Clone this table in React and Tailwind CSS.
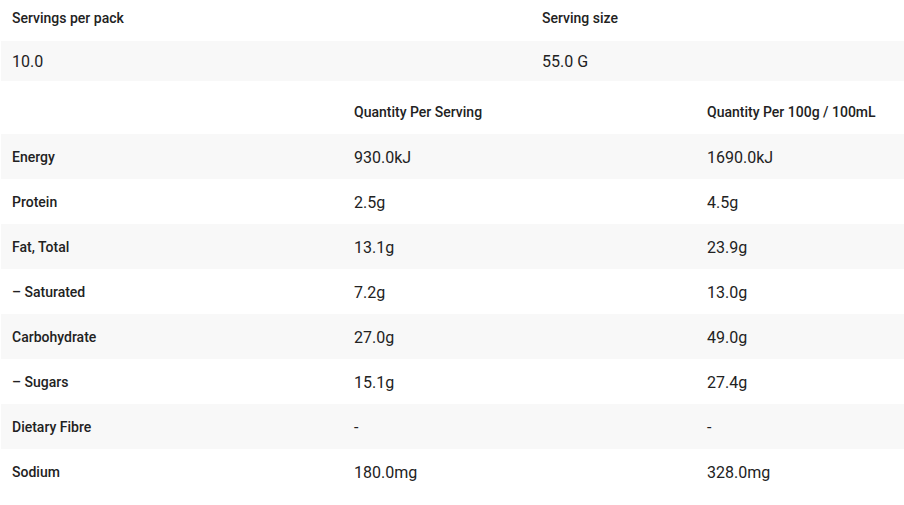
const rows = [
  ["Energy", "930.0kJ", "1690.0kJ"],
  ["Protein", "2.5g", "4.5g"],
  ["Fat, Total", "13.1g", "23.9g"],
  ["– Saturated", "7.2g", "13.0g"],
  ["Carbohydrate", "27.0g", "49.0g"],
  ["– Sugars", "15.1g", "27.4g"],
  ["Dietary Fibre", "-", "-"],
  ["Sodium", "180.0mg", "328.0mg"],
];

export default function App() {
  return (
    <div className="w-[904px] h-[505px] bg-white pl-px font-['Roboto',sans-serif] text-[#222]">
      {/* serving info */}
      <div className="grid grid-cols-[530px_1fr]">
        <div className="h-[37px] px-[11px] flex items-center text-[14px] font-medium">
          Servings per pack
        </div>
        <div className="h-[37px] px-[11px] flex items-center text-[14px] font-medium">
          Serving size
        </div>
      </div>
      <div className="grid grid-cols-[530px_1fr] mt-[4px] bg-[#f8f8f8] h-[40px] items-center">
        <div className="px-[11px] text-[16px] mt-px">10.0</div>
        <div className="px-[11px] text-[16px] mt-px">55.0 G</div>
      </div>

      {/* nutrition table */}
      <div className="mt-[9px]">
        <div className="grid grid-cols-[342px_353px_1fr] h-[44px] items-center text-[14px] font-medium">
          <div className="px-[11px]"></div>
          <div className="px-[11px]">Quantity Per Serving</div>
          <div className="px-[11px]">Quantity Per 100g / 100mL</div>
        </div>
        {rows.map((r, i) => (
          <div
            key={r[0]}
            className={
              "grid grid-cols-[342px_353px_1fr] h-[45px] items-center " +
              (i % 2 === 0 ? "bg-[#f8f8f8]" : "bg-white")
            }
          >
            <div className="px-[11px] text-[14px] font-medium pt-[2px]">{r[0]}</div>
            <div className="px-[11px] text-[16px] pt-[3px]">{r[1]}</div>
            <div className="px-[11px] text-[16px] pt-[3px]">{r[2]}</div>
          </div>
        ))}
      </div>
    </div>
  );
}
